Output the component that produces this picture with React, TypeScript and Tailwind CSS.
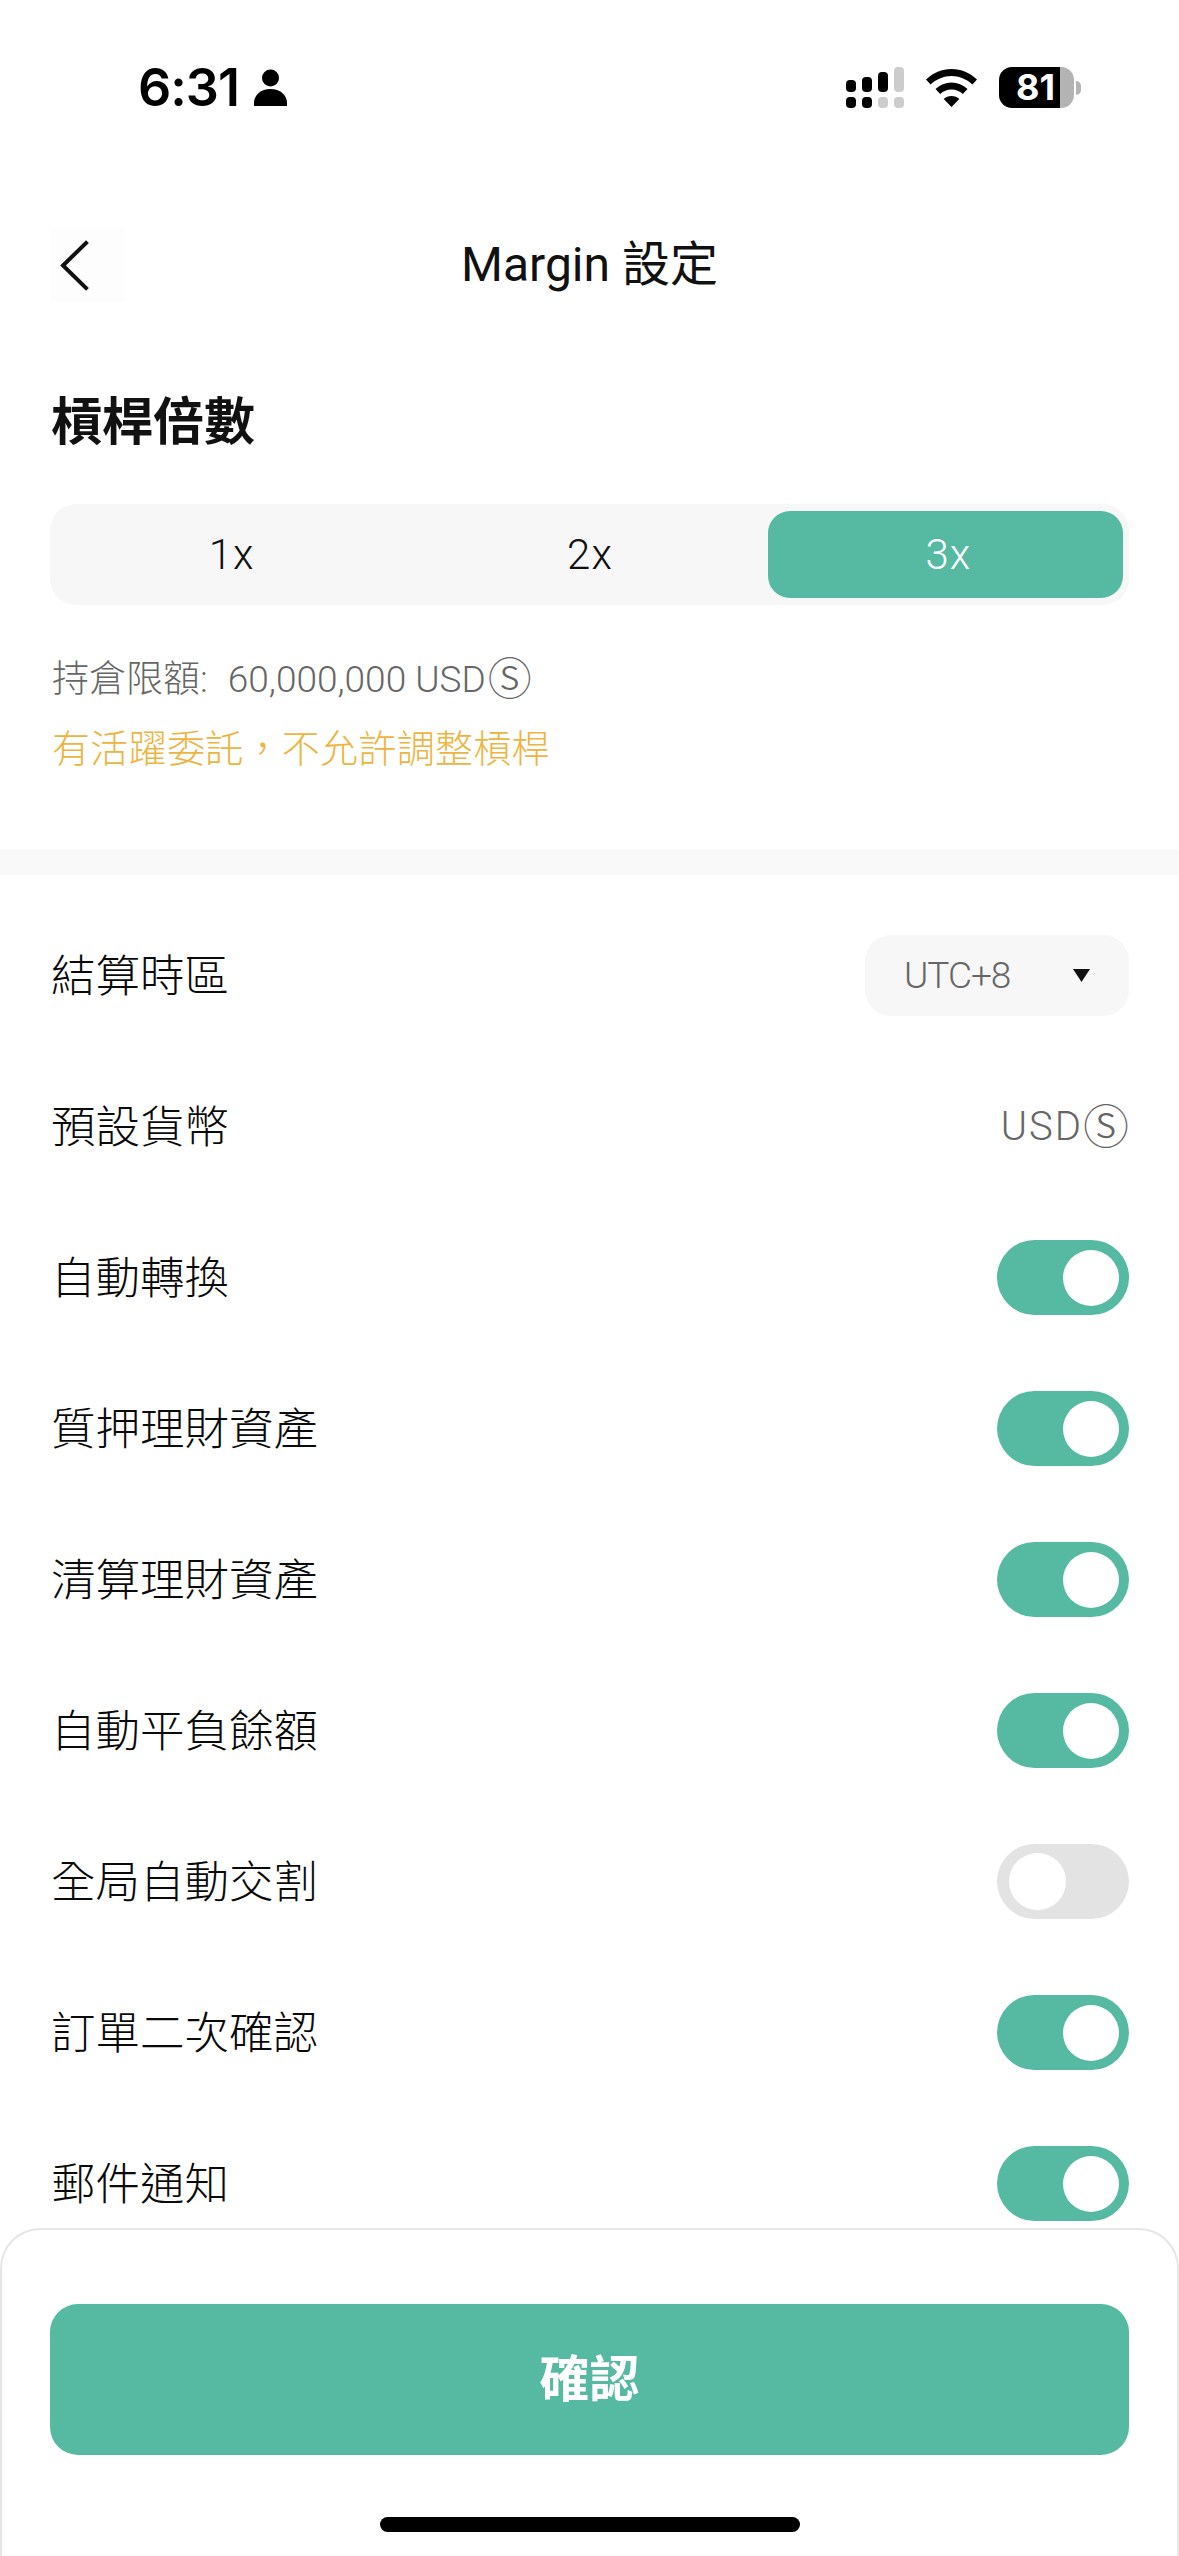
const font = "[font-family:Roboto,'Noto_Sans_CJK_TC',sans-serif]"

const rows = [
  { label: '自動轉換', on: true },
  { label: '質押理財資產', on: true },
  { label: '清算理財資產', on: true },
  { label: '自動平負餘額', on: true },
  { label: '全局自動交割', on: false },
  { label: '訂單二次確認', on: true },
  { label: '郵件通知', on: true },
]

const Toggle = ({ on }: { on: boolean }) => {
  return on ? (
    <div className="w-[132px] h-[75px] rounded-full bg-[#56baa3] flex items-center justify-end pr-[10px]">
      <div className="w-[56px] h-[56px] rounded-full bg-white" />
    </div>
  ) : (
    <div className="w-[132px] h-[75px] rounded-full bg-[#e3e3e3] flex items-center justify-start pl-[12px]">
      <div className="w-[57px] h-[57px] rounded-full bg-white" />
    </div>
  )
}

const Row = ({ label, children }: { label: string; children: React.ReactNode }) => {
  return (
    <div className="h-[151px] flex items-center justify-between">
      <span className="pl-[1px] pt-[3px] text-[44.5px] leading-[60px] font-light text-[#0a0a0a]">{label}</span>
      {children}
    </div>
  )
}

const StatusBar = () => {
  return (
    <div className="h-[228px] pt-[67px] pl-[138px] pr-[98px] flex items-start justify-between">
      <div className="h-[41px] flex items-center">
        <span className="text-[52px] leading-[41px] font-semibold text-black [font-family:Inter,sans-serif] tracking-[-1px]">6:31</span>
        <svg className="ml-[15px]" width="33" height="37" viewBox="0 0 33 37" fill="#000">
          <circle cx="16.5" cy="9" r="8.5" />
          <path d="M0 37v-3C0 26 7 20 16.5 20S33 26 33 34v3z" />
        </svg>
      </div>
      <div className="h-[41px] flex items-center">
        <svg width="58" height="41" viewBox="0 0 58 41">
          <rect x="0" y="13" width="10" height="12" rx="4" fill="#000" />
          <rect x="16" y="10" width="10" height="15" rx="4" fill="#000" />
          <rect x="32" y="5" width="10" height="20" rx="4" fill="#000" />
          <rect x="48" y="0" width="10" height="25" rx="4" fill="#cccccc" />
          <rect x="0" y="30" width="10" height="11" rx="4" fill="#000" />
          <rect x="16" y="30" width="10" height="11" rx="4" fill="#000" />
          <rect x="32" y="30" width="10" height="11" rx="4" fill="#cccccc" />
          <rect x="48" y="30" width="10" height="11" rx="4" fill="#cccccc" />
        </svg>
        <svg className="ml-[22px]" width="51" height="38" viewBox="0 0 51 38" fill="#000">
          <path d="M25.5 0C35 0 44 4 51 10.5l-4.6 5C40.500 10 33 7 25.500 7S10.500 10 4.600 15.500L0 10.500C7 4 16 0 25.500 0z" />
          <path d="M25.500 13.500c6 0 11.500 2.300 16 6.500l-4.700 5c-3-2.800-7-4.500-11.300-4.500s-8.300 1.700-11.300 4.500l-4.700-5c4.500-4.200 10-6.500 16-6.500z" />
          <path d="M25.500 27c3 0 5.700 1.100 7.800 3L25.500 38l-7.800-8c2.100-1.900 4.800-3 7.800-3z" />
        </svg>
        <div className="ml-[22px] w-[75px] h-[41px] rounded-[13px] bg-[linear-gradient(to_right,#000_61px,#b3b3b3_61px)] pl-[17px] flex items-center">
          <span className="text-[36px] leading-[41px] font-bold text-white [font-family:Inter,sans-serif]">81</span>
        </div>
        <div className="ml-[2px] w-[5px] h-[14px] rounded-r-full bg-[#b3b3b3]" />
      </div>
    </div>
  )
}

const App = () => {
  return (
    <div className={`relative w-[1179px] h-[2556px] overflow-hidden bg-white ${font}`}>
      <StatusBar />

      <div className="h-[74px] pl-[50px] pr-[50px] grid grid-cols-[1fr_auto_1fr] items-center">
        <div className="w-[75px] h-[74px] bg-[#fdfdfd] flex items-center">
          <svg className="ml-[10px]" width="29" height="51" viewBox="0 0 29 51" fill="none" stroke="#111111" strokeWidth="4" strokeLinecap="square">
            <path d="M26 3 3 25.500 26 48" />
          </svg>
        </div>
        <span className="text-[48px] leading-[60px] text-[#111111]">Margin 設定</span>
        <div />
      </div>

      <div className="px-[50px] h-[547px]">
        <h1 className="pt-[89px] pl-[1px] text-[51px] leading-[64px] font-bold text-[#111111]">槓桿倍數</h1>
        <div className="mt-[49px] h-[101px] rounded-[26px] bg-[#f7f7f7] p-[7px] pr-[6px] grid grid-cols-3">
          <div className="pr-[6px] flex items-center justify-center text-[42px] text-[#111111] font-light tracking-[1px]">1x</div>
          <div className="flex items-center justify-center text-[42px] text-[#111111] font-light tracking-[1px]">2x</div>
          <div className="pl-[6px] rounded-[22px] bg-[#56baa3] flex items-center justify-center text-[42px] text-white font-light tracking-[1px]">3x</div>
        </div>
        <p className="mt-[50px] pl-[2px] h-[50px] flex items-center font-light text-[#666666]">
          <span className="text-[37px] leading-[50px]">持倉限額:</span>
          <span className="ml-[20px] text-[37px] leading-[50px]">60,000,000 USD</span>
          <span className="ml-[2px] text-[44px] leading-[50px]">Ⓢ</span>
        </p>
        <p className="mt-[19px] pl-[2px] text-[38px] leading-[50px] font-light text-[#edb53f] tracking-[0.3px]">有活躍委託，不允許調整槓桿</p>
      </div>

      <div className="h-[26px] bg-[#f9f9f9]" />

      <div className="px-[50px] pt-[25px]">
        <Row label="結算時區">
          <div className="w-[264px] h-[81px] rounded-[26px] bg-[#f7f7f7] pl-[39px] pr-[39px] flex items-center justify-between">
            <span className="text-[37px] font-light text-[#666666] tracking-[-1px]">UTC+8</span>
            <svg width="17" height="13" viewBox="0 0 17 13" fill="#111111">
              <path d="M0 0h17L8.500 13z" />
            </svg>
          </div>
        </Row>
        <Row label="預設貨幣">
          <span className="h-[50px] flex items-center font-light text-[#666666]">
            <span className="text-[40px] leading-[50px] tracking-[2px]">USD</span>
            <span className="text-[46px] leading-[50px]">Ⓢ</span>
          </span>
        </Row>
        {rows.map((row) => (
          <Row key={row.label} label={row.label}>
            <Toggle on={row.on} />
          </Row>
        ))}
      </div>

      <div className="absolute left-0 right-0 top-[2228px] bottom-0 rounded-t-[40px] border-t-2 border-l-2 border-r-2 border-[#e6e6e6] bg-white px-[48px] pt-[74px]">
        <button className="w-full h-[151px] pt-[2px] rounded-[28px] bg-[#56baa3] text-white text-[50px] font-bold flex items-center justify-center">確認</button>
        <div className="mt-[62px] mx-auto w-[420px] h-[15px] rounded-full bg-black" />
      </div>
    </div>
  )
}

export default App
